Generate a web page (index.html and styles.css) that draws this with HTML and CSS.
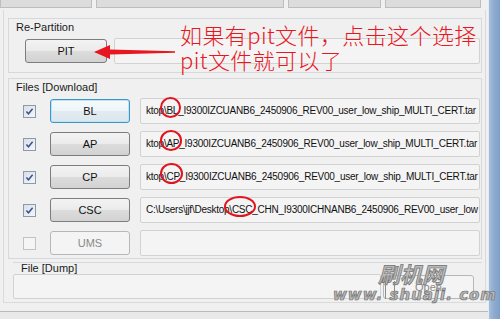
FILE: index.html
```html
<!DOCTYPE html>
<html lang="zh-CN">

<head>
  <meta charset="UTF-8">
  <meta name="viewport" content="width=device-width, initial-scale=1.0">
  <title>Odin3</title>
  <link rel="stylesheet" href="styles.css">
</head>

<body>
  <div class="window">
    <div class="main">
      <div class="tabs">
        <span class="tab t1"></span>
        <span class="tab t2"></span>
        <span class="tab t3"></span>
        <span class="tab t4"></span>
      </div>
      <div class="panel">
        <!-- Re-Partition -->
        <div class="group repart">
          <div class="caption">Re-Partition</div>
          <div class="row">
            <button class="btn pit">PIT</button>
            <div class="field"></div>
          </div>
        </div>
        <!-- Files [Download] -->
        <div class="group files">
          <div class="caption">Files [Download]</div>
          <div class="rows">
            <div class="row">
              <span class="check on"><svg viewBox="0 0 11 11"><path d="M2.4 5.4 L4.5 7.8 L8.6 2.8" /></svg></span>
              <button class="btn focus">BL</button>
              <div class="field">ktop<span class="mark">\BL</span>_I9300IZCUANB6_2450906_REV00_user_low_ship_MULTI_CERT.tar</div>
            </div>
            <div class="row">
              <span class="check on"><svg viewBox="0 0 11 11"><path d="M2.4 5.4 L4.5 7.8 L8.6 2.8" /></svg></span>
              <button class="btn">AP</button>
              <div class="field">ktop<span class="mark">\AP</span>_I9300IZCUANB6_2450906_REV00_user_low_ship_MULTI_CERT.tar</div>
            </div>
            <div class="row">
              <span class="check on"><svg viewBox="0 0 11 11"><path d="M2.4 5.4 L4.5 7.8 L8.6 2.8" /></svg></span>
              <button class="btn">CP</button>
              <div class="field">ktop<span class="mark">\CP</span>_I9300IZCUANB6_2450906_REV00_user_low_ship_MULTI_CERT.tar</div>
            </div>
            <div class="row">
              <span class="check on"><svg viewBox="0 0 11 11"><path d="M2.4 5.4 L4.5 7.8 L8.6 2.8" /></svg></span>
              <button class="btn">CSC</button>
              <div class="field">C:\Users\jjf\Desktop<span class="mark wide">\CSC</span>_CHN_I9300ICHNANB6_2450906_REV00_user_low</div>
            </div>
            <div class="row">
              <span class="check off"></span>
              <button class="btn" disabled>UMS</button>
              <div class="field"></div>
            </div>
          </div>
        </div>
        <!-- File [Dump] -->
        <div class="group dump">
          <div class="caption">File [Dump]</div>
          <div class="row">
            <div class="field"></div>
            <button class="btn open" disabled>Open</button>
          </div>
        </div>
      </div>
      <div class="status"></div>
    </div>
    <div class="edge"></div>

    <!-- 标注 -->
    <div class="note">如果有pit文件，点击这个选择<br>pit文件就可以了</div>
    <svg class="arrow" viewBox="0 0 84 16">
      <path d="M1 8 L17 1 L17 5.6 L82 7.3 L82 8.7 L17 10.6 L17 15 Z" />
    </svg>
    <div class="watermark">
      <div class="wm-cn">刷机网</div>
      <div class="wm-en">www. shuaji. com</div>
    </div>
  </div>
</body>

</html>
```

FILE: styles.css
```css
* {
  padding: 0;
  margin: 0;
  box-sizing: border-box;
}

body {
  background: #f0f0f0;
  font-family: "Liberation Sans", Arial, sans-serif;
  font-size: 11px;
  color: #1a1a1a;
}

.window {
  position: relative;
  display: flex;
  width: 500px;
  height: 319px;
  overflow: hidden;
  background: #f0f0f0;
}

.main {
  width: 488px;
  display: flex;
  flex-direction: column;
}

.edge {
  width: 12px;
  background: linear-gradient(to right, #e4ebf3 0, #e4ebf3 1px, #a6bfdb 1px, #8eabcf 6px, #7f9fc6 100%);
}

/* top tabs */
.tabs {
  display: flex;
  gap: 4px;
  height: 8px;
}

.tab {
  height: 8px;
  background: #dcdcdc;
  border: 1px solid #bdbdbd;
  border-top: none;
}

.t1 { width: 92px; }
.t2 { width: 188px; }
.t3 { width: 93px; }
.t4 { width: 96px; }

/* panel */
.panel {
  margin: 2px 0 0 3px;
  width: 483px;
  height: 293px;
  border: 1px solid #dadada;
  border-top: none;
  padding-left: 4px;
}

.group {
  width: 474px;
  border: 1px solid #d6d9dc;
}

.caption {
  margin: 3px 0 0 7px;
  line-height: 11px;
  height: 11px;
}

.row {
  display: flex;
  align-items: center;
}

.repart {
  margin-top: 8px;
  height: 55px;
}

.repart .row {
  margin-top: 5px;
}

.files {
  margin-top: 5px;
  height: 181px;
}

.rows {
  margin-top: 5px;
  display: flex;
  flex-direction: column;
  gap: 7px;
}

.dump {
  margin: 3px 0 0 5px;
  width: 469px;
  border: none;
  border-top: 1px solid #d6d9dc;
}

.dump .caption {
  margin: 0 0 0 8px;
}

/* controls */
.btn {
  height: 24px;
  width: 80px;
  font-family: "Liberation Sans", Arial, sans-serif;
  font-size: 11px;
  color: #111;
  border: 1px solid #7d7d7d;
  border-radius: 3px;
  background: linear-gradient(#f3f3f3 0%, #ebebeb 48%, #dcdcdc 52%, #d2d2d2 100%);
}

.btn.focus {
  border-color: #3d97c4;
  background: linear-gradient(#f6fafd 0%, #eef4f8 48%, #e2ebf1 52%, #dce6ee 100%);
  box-shadow: inset 0 0 0 1px #bfe3f5;
}

.btn:disabled {
  color: #8a8a8a;
  border-color: #b4b8bb;
  background: #f4f4f4;
}

.pit {
  width: 82px;
  margin-left: 16px;
}

.field {
  flex: 1;
  height: 26px;
  margin-right: 1px;
  border: 1px solid #d2d2d2;
  border-radius: 2px;
  background: #f4f4f4;
  padding-left: 5px;
  font-size: 10px;
  letter-spacing: -0.25px;
  line-height: 24px;
  white-space: nowrap;
  color: #111;
}

.repart .field {
  margin-left: 7px;
}

.files .btn {
  margin-left: 14px;
}

.files .field {
  margin-left: 10px;
}

.dump .field {
  flex: none;
  width: 368px;
  height: 25px;
}

.open {
  width: 91px;
  margin-left: 1px;
  border-color: #c8c8c8;
  color: #9a9a9a;
}

.check {
  width: 13px;
  height: 13px;
  margin-left: 14px;
  border: 1px solid #8f9aa8;
  background: linear-gradient(135deg, #d9dfe8, #f4f6f9);
}

.check svg {
  display: block;
  width: 11px;
  height: 11px;
}

.check path {
  fill: none;
  stroke: #3b5290;
  stroke-width: 1.5;
}

.check.off {
  border-color: #c0c4c8;
  background: #f5f5f5;
}

/* red circles */
.mark {
  position: relative;
}

.mark::after {
  content: '';
  position: absolute;
  left: -4px;
  right: -3px;
  top: -8px;
  bottom: -2px;
  border: 2.5px solid #e0141e;
  border-radius: 50%;
}

.mark.wide::after {
  left: -5px;
  right: -4px;
}

.status {
  margin-top: 8px;
  flex: 1;
  border-top: 1px solid #b9b9b9;
  background: #e9e9e9;
}

/* annotation */
.note {
  position: absolute;
  left: 180px;
  top: 22px;
  font-family: "Noto Sans CJK SC", sans-serif;
  font-weight: 300;
  font-size: 22px;
  line-height: 25px;
  letter-spacing: 0.4px;
  color: #e8161e;
  white-space: nowrap;
}

.arrow {
  position: absolute;
  left: 93px;
  top: 44px;
  width: 84px;
  height: 16px;
  fill: #e8161e;
}

.watermark {
  position: absolute;
  left: 333px;
  top: 260px;
  font-style: italic;
  font-weight: bold;
  color: #b8b8b8;
  -webkit-text-stroke: 0.7px #707070;
}

.wm-cn {
  position: relative;
  margin-left: 45px;
  font-family: "Noto Sans CJK SC", sans-serif;
  font-size: 22px;
  line-height: 26px;
}

.wm-cn::after {
  content: '';
  position: absolute;
  left: 7px;
  top: 21px;
  width: 8px;
  height: 18px;
  border-left: 1px solid #8c8c8c;
  border-right: 1px solid #8c8c8c;
}

.wm-en {
  font-family: "DejaVu Sans", sans-serif;
  font-size: 15px;
  line-height: 18px;
  letter-spacing: 1px;
}
```
